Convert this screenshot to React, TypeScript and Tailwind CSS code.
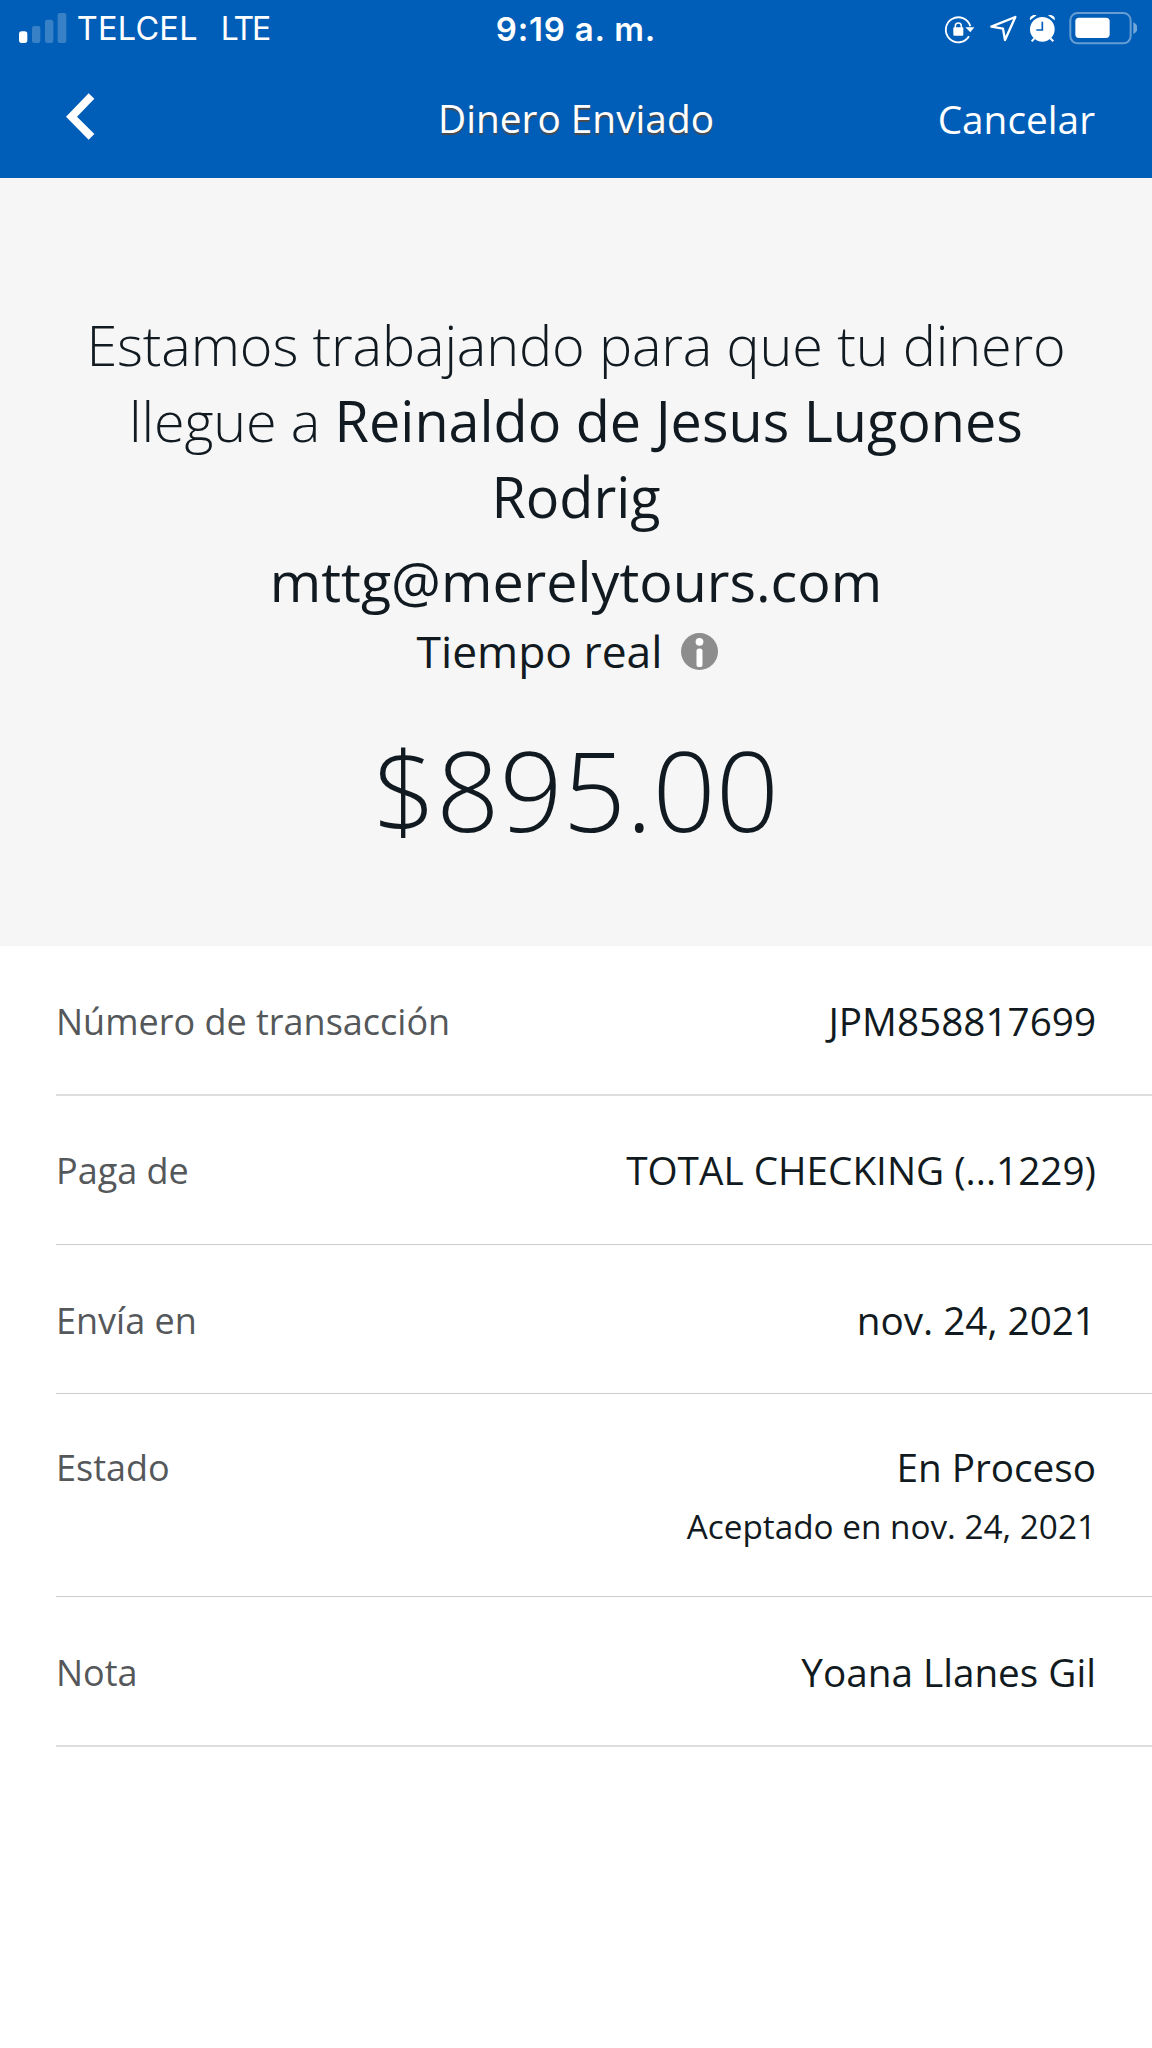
import type { ReactNode } from 'react';

type RowProps = {
  label: string;
  value: string;
  detail?: string;
  className: string;
};

function SignalBars() {
  return (
    <svg className="mt-[13px] h-[30px] w-[48px] shrink-0" viewBox="56 39 144 90" fill="#fff">
      <rect x="56" y="94" width="25" height="35" rx="8" />
      <g opacity="0.22">
        <rect x="95" y="78" width="25" height="51" rx="7" />
        <rect x="134" y="59" width="25" height="70" rx="7" />
        <rect x="172" y="39" width="26" height="90" rx="7" />
      </g>
    </svg>
  );
}

function RotationLock() {
  return (
    <svg className="h-[36.67px] w-[30.67px]" viewBox="12 30 92 110" fill="none" stroke="#fff">
      <path d="M87 109 A37.5 37.5 0 1 1 91 79" strokeWidth="5.5" />
      <path d="M76 82 H103 L91 97 Z" fill="#fff" stroke="none" />
      <rect x="40" y="82" width="30" height="25" rx="3" fill="#fff" stroke="none" />
      <path d="M46 84 V78 a9 9 0 0 1 18 0 V84" strokeWidth="4.5" />
    </svg>
  );
}

function LocationArrow() {
  return (
    <svg className="ml-[15px] h-[36.67px] w-[27px]" viewBox="149 30 81 110" fill="none" stroke="#fff">
      <path d="M225 51 L194 120 L188 86 L153 80 Z" strokeWidth="7" strokeLinejoin="round" />
    </svg>
  );
}

function AlarmClock() {
  return (
    <svg className="ml-[12.67px] h-[36.67px] w-[26.67px]" viewBox="268 30 80 110" fill="#fff">
      <circle cx="308" cy="88" r="37" />
      <path d="M271 61 C268 50 279 42 291 46 Z" />
      <path d="M345 61 C348 50 337 42 325 46 Z" />
      <path d="M284 115 L276 124 M332 115 L341 124" stroke="#fff" strokeWidth="6" />
      <path d="M308 65 V90 H290" fill="none" stroke="#005eb8" strokeWidth="5" />
    </svg>
  );
}

function Battery() {
  return (
    <svg className="ml-[12.67px] h-[36.67px] w-[68.67px]" viewBox="386 30 206 110" fill="#fff">
      <rect x="390" y="39" width="181" height="91" rx="22" fill="none" stroke="#fff" strokeOpacity="0.4" strokeWidth="6" />
      <rect x="405" y="53" width="103" height="61" rx="11" />
      <path d="M579 67 C596 76 596 93 579 102 Z" opacity="0.45" />
    </svg>
  );
}

function InfoIcon() {
  return (
    <svg className="ml-[18px] mt-[12px] size-[37px]" viewBox="0 0 37 37">
      <circle cx="18.5" cy="18.5" r="18.5" fill="#8d8d8d" />
      <circle cx="18.5" cy="8.8" r="3.9" fill="#fff" />
      <rect x="15.5" y="15.5" width="6" height="18.5" rx="2.6" fill="#fff" />
    </svg>
  );
}

function StatusBar() {
  return (
    <div className="grid h-[60px] grid-cols-[1fr_auto_1fr] font-['Inter',sans-serif] text-[32.5px] leading-[58px] whitespace-nowrap">
      <div className="flex pl-[18.67px]">
        <SignalBars />
        <span className="ml-[10px] tracking-[0.25px]">TELCEL</span>
        <span className="ml-[23px] text-[32px] tracking-[-2.2px]">LTE</span>
      </div>
      <span className="text-[33px] font-semibold tracking-[0.8px]">9:19 a. m.</span>
      <div className="flex justify-end pt-[10px] pr-[14.67px]">
        <RotationLock />
        <LocationArrow />
        <AlarmClock />
        <Battery />
      </div>
    </div>
  );
}

function NavBar() {
  return (
    <div className="grid h-[118px] grid-cols-[1fr_auto_1fr] items-center pb-[2px] leading-[60px]">
      <button className="-mt-[3px] ml-[66px] w-[29px]" aria-label="Atrás">
        <svg className="h-[47px] w-[29px]" viewBox="198 280 87 141" fill="#fff">
          <path d="M198 351 L266 281 L283 297 L231 351 L283 403 L266 420 Z" />
        </svg>
      </button>
      <h1 className="text-[38.8px] [text-shadow:0_2px_1px_#4b4b4b]">Dinero Enviado</h1>
      <button className="justify-self-end pt-px pr-[57px] text-[38.8px]">Cancelar</button>
    </div>
  );
}

function Row({ label, value, detail, className }: RowProps) {
  return (
    <div className={`flex justify-between pr-[56px] ${className}`}>
      <dt className="pt-px text-[36px] leading-[60px] text-[#55585a]">{label}</dt>
      <dd className="text-right text-[38.7px] leading-[60px]">
        {value}
        {detail && <p className="text-[33.3px] leading-[58px]">{detail}</p>}
      </dd>
    </div>
  );
}

function Summary({ children }: { children: ReactNode }) {
  return (
    <section className="h-[768px] bg-[#f6f6f6] pt-[128px] text-center text-[55.75px] leading-[76px]">
      {children}
    </section>
  );
}

export default function App() {
  return (
    <main className="min-h-[2048px] w-[1152px] bg-white font-['Open_Sans',sans-serif] text-[#111a20]">
      <header className="bg-[#005eb8] text-white">
        <StatusBar />
        <NavBar />
      </header>

      <Summary>
        <p className="px-[80px] font-light tracking-[-0.15px]">
          Estamos trabajando para que tu dinero llegue a{' '}
          <span className="font-normal tracking-normal">Reinaldo de Jesus Lugones Rodrig</span>
        </p>
        <p className="mt-[9px] text-[55.6px]">mttg@merelytours.com</p>
        <div className="mt-[2px] flex justify-center pr-[18px] text-[44.4px] leading-[60px]">
          <span>Tiempo real</span>
          <InfoIcon />
        </div>
        <p className="mt-[33px] text-[110.8px] leading-[150px] font-light">$895.00</p>
      </Summary>

      <dl className="ml-[56px]">
        <Row className="h-[150px] border-b-2 border-[#dedede] pt-[45px]" label="Número de transacción" value="JPM858817699" />
        <Row className="h-[149px] border-b border-[#cdcdcd] pt-[44px]" label="Paga de" value="TOTAL CHECKING (...1229)" />
        <Row className="h-[149px] border-b border-[#cdcdcd] pt-[45px]" label="Envía en" value="nov. 24, 2021" />
        <Row className="h-[203px] border-b border-[#cdcdcd] pt-[43px]" label="Estado" value="En Proceso" detail="Aceptado en nov. 24, 2021" />
        <Row className="h-[150px] border-b-2 border-[#dedede] pt-[45px]" label="Nota" value="Yoana Llanes Gil" />
      </dl>
    </main>
  );
}
